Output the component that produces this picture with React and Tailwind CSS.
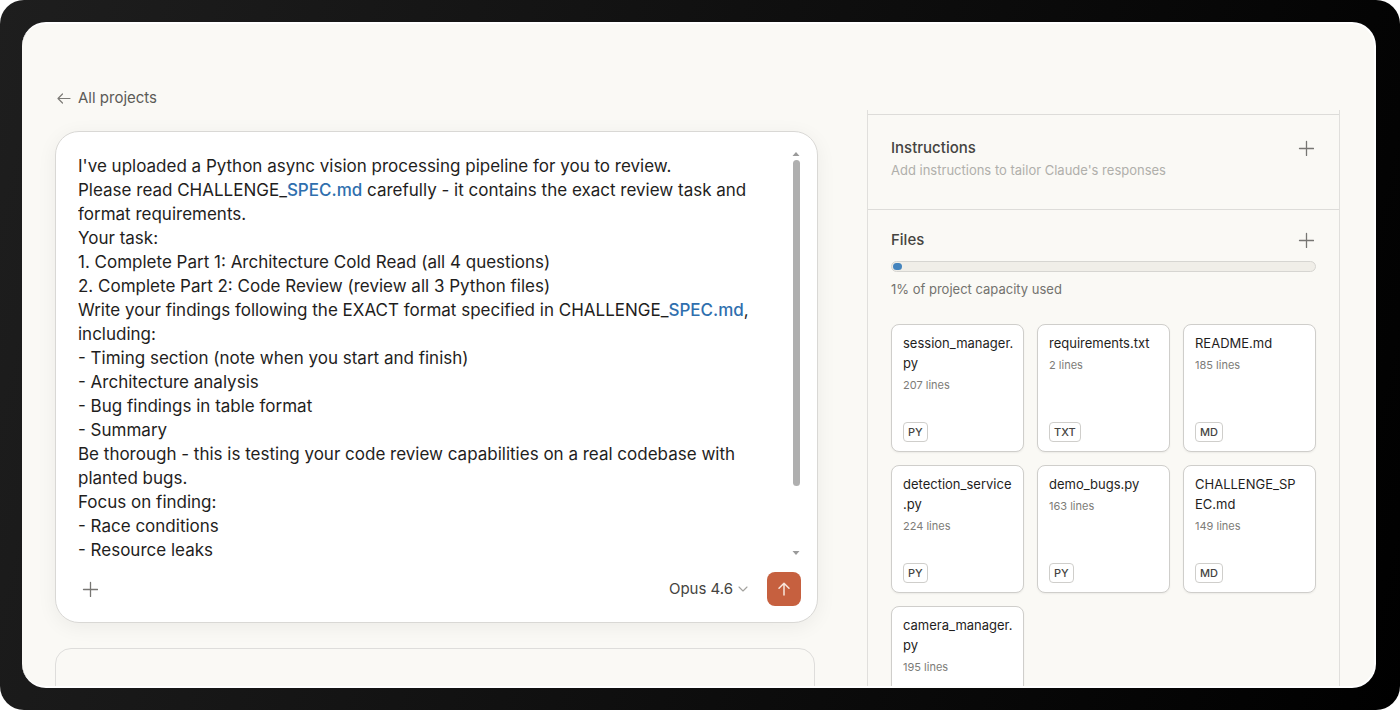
import React from "react";

const files = [
  { name: ["session_manager.", "py"], lines: 207, type: "PY" },
  { name: ["requirements.txt"], lines: 2, type: "TXT" },
  { name: ["README.md"], lines: 185, type: "MD" },
  { name: ["detection_service", ".py"], lines: 224, type: "PY" },
  { name: ["demo_bugs.py"], lines: 163, type: "PY" },
  { name: ["CHALLENGE_SP", "EC.md"], lines: 149, type: "MD" },
  { name: ["camera_manager.", "py"], lines: 195 },
];

const SpecLink = () => (
  <a href="#spec" className="font-medium text-[#2f6fae]">SPEC.md</a>
);

const message = [
  "I've uploaded a Python async vision processing pipeline for you to review.",
  <>Please read CHALLENGE_<SpecLink /> carefully - it contains the exact review task and</>,
  "format requirements.",
  "Your task:",
  "1. Complete Part 1: Architecture Cold Read (all 4 questions)",
  "2. Complete Part 2: Code Review (review all 3 Python files)",
  <>Write your findings following the EXACT format specified in CHALLENGE_<SpecLink />,</>,
  "including:",
  "- Timing section (note when you start and finish)",
  "- Architecture analysis",
  "- Bug findings in table format",
  "- Summary",
  "Be thorough - this is testing your code review capabilities on a real codebase with",
  "planted bugs.",
  "Focus on finding:",
  "- Race conditions",
  "- Resource leaks",
];

function IconButton({ label }) {
  return (
    <button type="button" aria-label={label} className="flex size-6 items-center justify-center text-[#777673]">
      <svg viewBox="0 0 16 16" className="size-4" fill="none" stroke="currentColor" strokeWidth="1.3" strokeLinecap="round" aria-hidden="true">
        <path d="M8.500 1.500v14M1.500 8.500h14" />
      </svg>
    </button>
  );
}

function Composer() {
  return (
    <form
      onSubmit={(e) => e.preventDefault()}
      className="rounded-3xl border border-[#d9d8d5] bg-white pt-[19px] pr-4 pb-4 pl-[22px] shadow-[0_4px_20px_rgba(0,0,0,0.06)]"
    >
      <div className="flex gap-2">
        <div
          role="textbox"
          aria-label="Message"
          aria-multiline="true"
          contentEditable
          suppressContentEditableWarning
          className="mt-[3px] min-w-0 flex-1 overflow-hidden text-[17px] leading-6 whitespace-nowrap text-[#1f1e1d] outline-none"
        >
          {message.map((line, i) => (
            <p key={i}>{line}</p>
          ))}
        </div>
        <div className="flex w-2.5 flex-col items-center justify-between text-[#9a9a9a]" aria-hidden="true">
          <div className="flex flex-col items-center gap-1">
            <svg viewBox="0 0 8 4" className="mt-px h-1 w-2" fill="currentColor"><path d="M4 0l3.500 4h-7z" /></svg>
            <div className="h-[326px] w-[7px] rounded-full bg-[#afafaf]" />
          </div>
          <svg viewBox="0 0 8 4" className="mb-[7px] h-1 w-2" fill="currentColor"><path d="M4 4L.5 0h7z" /></svg>
        </div>
      </div>
      <div className="mt-2.5 flex items-center justify-between">
        <IconButton label="Add attachment" />
        <div className="flex items-center gap-[18px]">
          <button type="button" className="flex items-center gap-1 text-[15px] text-[#454441]">
            Opus 4.6
            <svg viewBox="0 0 12 12" className="size-3" fill="none" stroke="#a3a29e" strokeWidth="1.1" strokeLinecap="round" strokeLinejoin="round" aria-hidden="true">
              <path d="M2 4l4 4 4-4" />
            </svg>
          </button>
          <button type="submit" aria-label="Send message" className="flex size-[34px] items-center justify-center rounded-lg bg-[#c6603f] text-[#f8e6dc]">
            <svg viewBox="0 0 16 16" className="size-4" fill="none" stroke="currentColor" strokeWidth="1.5" strokeLinecap="round" strokeLinejoin="round" aria-hidden="true">
              <path d="M8 14V2.200M3 7.200l5-5 5 5" />
            </svg>
          </button>
        </div>
      </div>
    </form>
  );
}

function FileCard({ file }) {
  return (
    <li className="flex h-32 flex-col items-start justify-between rounded-lg border border-[#cfcecb] bg-white px-[11px] pt-2 pb-[9px] shadow-[0_1px_2px_rgba(0,0,0,0.06)]">
      <div>
        <h3 className="text-[13px] leading-5 whitespace-nowrap text-[#1f1e1d]">
          {file.name.map((part) => (
            <span key={part} className="block">{part}</span>
          ))}
        </h3>
        <p className="mt-1 text-[11px] leading-4 text-[#7d7c78]">{file.lines} lines</p>
      </div>
      {file.type && (
        <span className="rounded border border-[#cfcecb] px-1 text-[11px] leading-[18px] font-medium text-[#454441]">{file.type}</span>
      )}
    </li>
  );
}

export default function App() {
  return (
    <div className="h-screen bg-white font-['Inter',sans-serif]">
      <div className="flex h-full rounded-3xl bg-linear-[105deg] from-[#1e1e1e] to-black py-[22px] pr-6 pl-[22px]">
        <main className="flex min-w-0 flex-1 items-start gap-[49px] overflow-hidden rounded-3xl border-t-2 border-r-2 border-b-2 border-white bg-[#faf9f5] pr-[34px] pl-[33px]">
          <div className="min-w-0 flex-1 pt-[62px]">
            <a href="#projects" className="ml-px inline-flex h-6 items-center gap-1.5 text-[15px] text-[#5c5b57]">
              <svg viewBox="0 0 16 16" className="size-4" fill="none" stroke="#7c7b77" strokeWidth="1.2" strokeLinecap="round" strokeLinejoin="round" aria-hidden="true">
                <path d="M14 8.500H2M6.500 4L2 8.500l4.500 4.500" />
              </svg>
              All projects
            </a>
            <div className="mt-[19px]">
              <Composer />
            </div>
            <div className="mt-[25px] mr-[3px] h-40 rounded-2xl border border-[#dedddb]" />
          </div>

          <aside className="mt-[86px] w-[473px] shrink-0 border-x border-[#e0dfdc] pt-1">
            <section className="h-[95px] border-t border-[#dddcd9] px-[23px] pt-[21px]">
              <div className="-mr-0.5 flex items-center justify-between">
                <h2 className="text-[15px] leading-6 font-medium text-[#454441]">Instructions</h2>
                <IconButton label="Add instructions" />
              </div>
              <p className="text-[13px] leading-5 text-[#b0afab]">Add instructions to tailor Claude's responses</p>
            </section>
            <section className="border-t border-[#dddcd9] px-[23px] pt-[18px]">
              <div className="-mr-0.5 flex items-center justify-between">
                <h2 className="text-[15px] leading-6 font-medium text-[#454441]">Files</h2>
                <IconButton label="Add files" />
              </div>
              <div role="progressbar" aria-label="Project capacity" aria-valuenow={1} aria-valuemin={0} aria-valuemax={100} className="mt-[9px] flex h-[11px] items-center rounded-full border border-[#d6d5d1] bg-[#f0eee8] px-px">
                <div className="h-[7px] w-[9px] rounded-full bg-[#4484bd]" />
              </div>
              <p className="mt-[7px] text-[13px] leading-5 text-[#73726e]">1% of project capacity used</p>
              <ul className="mt-[25px] grid grid-cols-3 gap-[13px] pb-6">
                {files.map((f) => (
                  <FileCard key={f.name.join("")} file={f} />
                ))}
              </ul>
            </section>
          </aside>
        </main>
      </div>
    </div>
  );
}
